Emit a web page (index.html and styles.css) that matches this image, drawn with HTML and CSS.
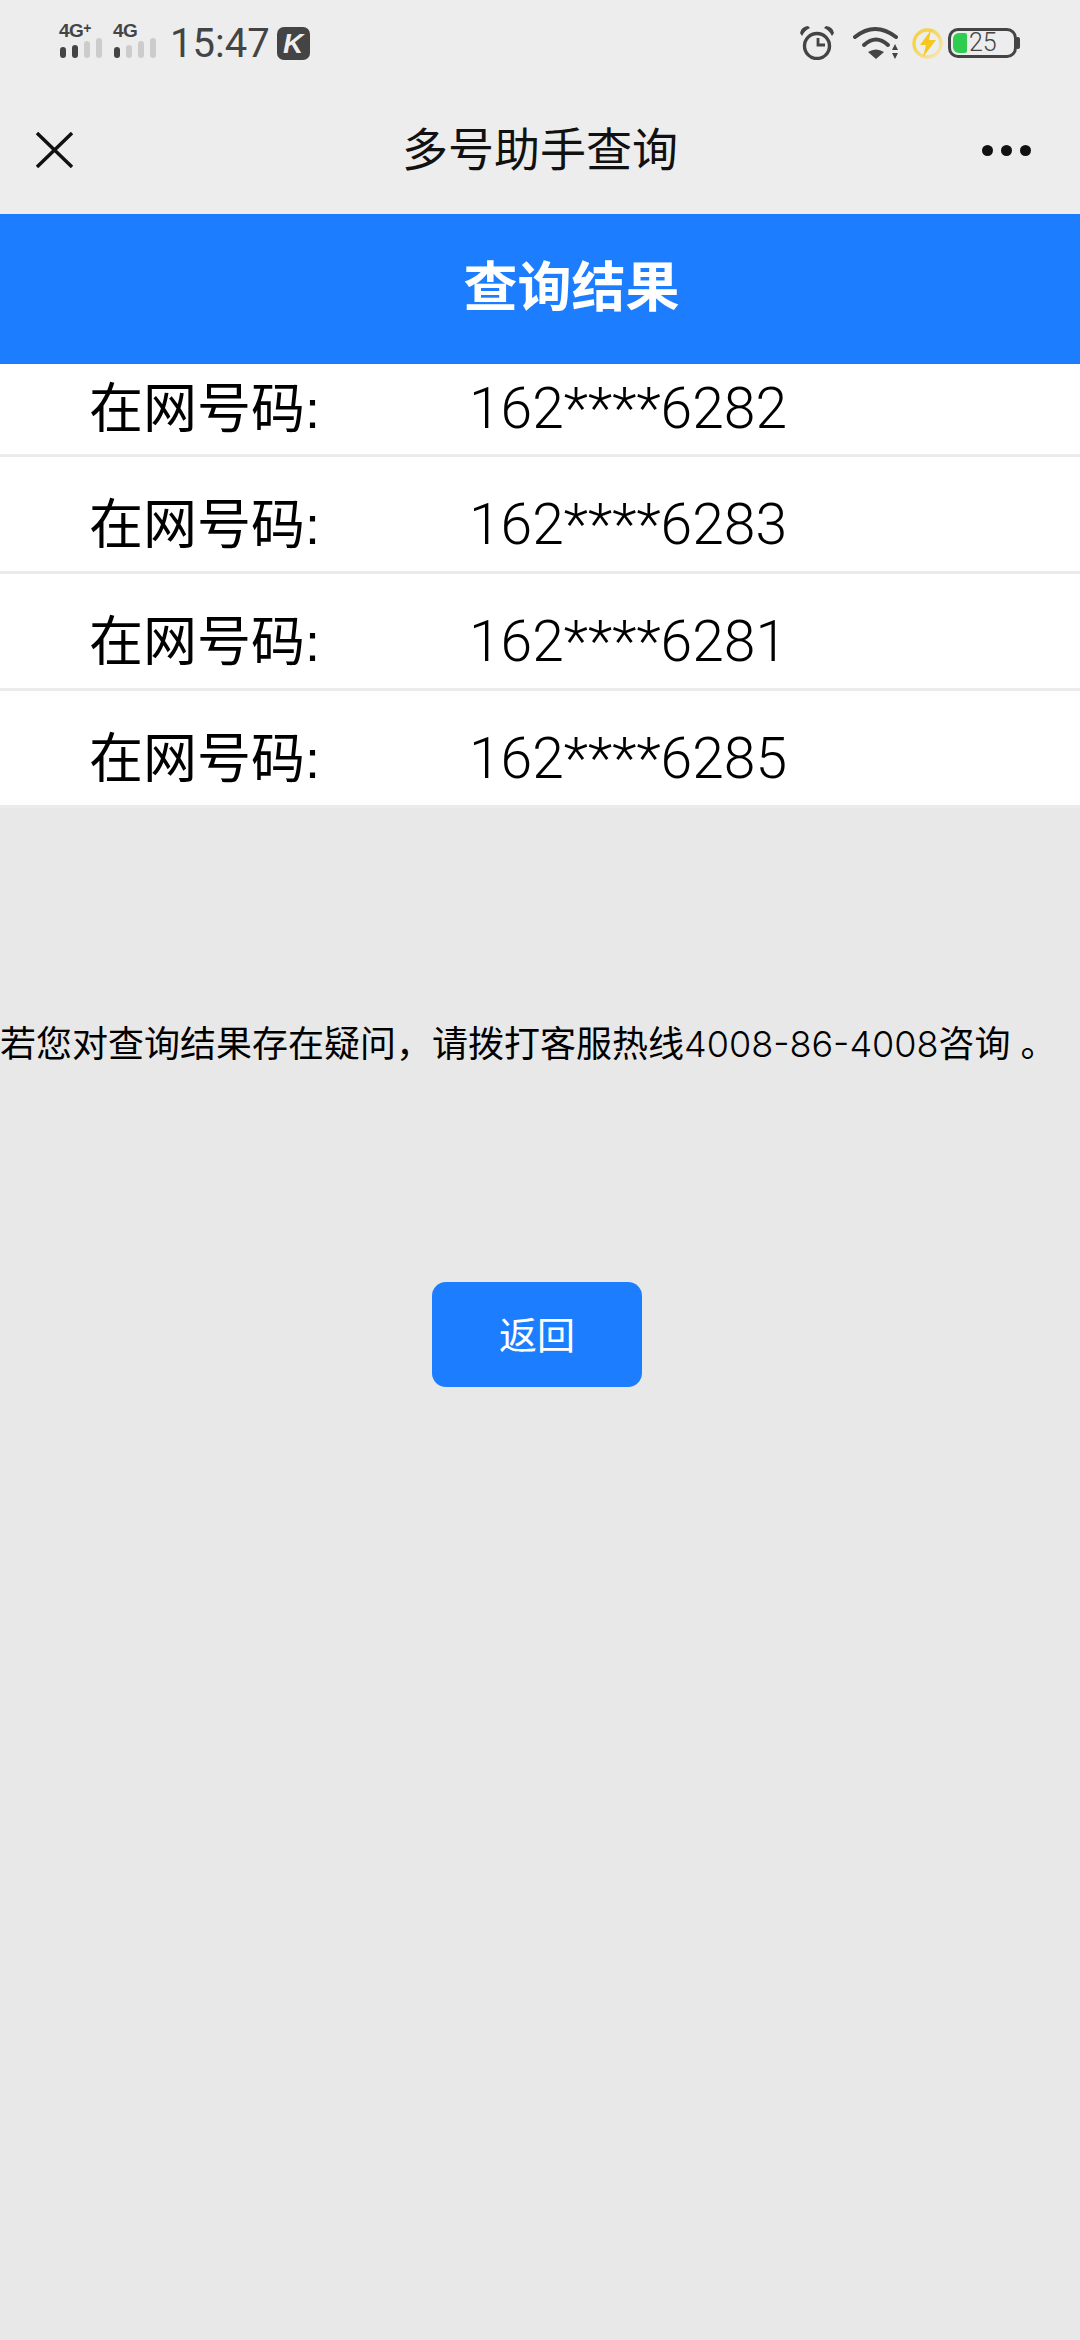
FILE: index.html
```html
<!DOCTYPE html>
<html lang="zh-CN">
<head>
    <meta charset="UTF-8">
    <meta name="viewport" content="width=device-width, initial-scale=1.0">
    <title>多号助手查询</title>
    <link rel="stylesheet" href="styles.css">
</head>
<body>
    <div class="status-bar">
        <div class="status-left">
            <div class="signal">
                <span class="signal-label">4G<sup>+</sup></span>
                <div class="bars">
                    <i class="on"></i><i class="on"></i><i></i><i></i>
                </div>
            </div>
            <div class="signal">
                <span class="signal-label">4G</span>
                <div class="bars">
                    <i class="on"></i><i></i><i></i><i></i>
                </div>
            </div>
            <span class="clock">15:47</span>
            <span class="k-badge">K</span>
        </div>
        <div class="status-right">
            <svg class="icon-alarm" width="34" height="34" viewBox="0 0 34 34">
                <circle cx="17" cy="20" r="12.5" fill="none" stroke="#444" stroke-width="3.4"/>
                <path d="M18 12V19H25" fill="none" stroke="#444" stroke-width="2.8"/>
                <path d="M0 7Q1 1 8 0L10 2Q5 4 2 10Z M34 7Q33 1 26 0L24 2Q29 4 32 10Z" fill="#444"/>
            </svg>
            <svg class="icon-wifi" width="46" height="34" viewBox="0 0 46 34">
                <path d="M2 11Q22 -5 43 11" fill="none" stroke="#444" stroke-width="4" stroke-linecap="round"/>
                <path d="M11 19Q23 8 35 19" fill="none" stroke="#444" stroke-width="4" stroke-linecap="round"/>
                <path d="M15 26Q23 21 31 26L23 33Z" fill="#444"/>
                <path d="M42 18L45 24H39Z M39 27H45L42 33Z" fill="#444"/>
            </svg>
            <svg class="icon-charge" width="31" height="31" viewBox="0 0 31 31">
                <defs>
                    <linearGradient id="ringFade" x1="0" y1="0" x2="1" y2="1">
                        <stop offset="0.3" stop-color="#f5d34c"/>
                        <stop offset="1" stop-color="#f5e9bb"/>
                    </linearGradient>
                </defs>
                <circle cx="15.5" cy="15.5" r="13.5" fill="none" stroke="url(#ringFade)" stroke-width="3.4"/>
                <path d="M19 2L8 17H14L11 29L24 12H17Z" fill="#f6c81e"/>
            </svg>
            <div class="battery">
                <div class="battery-body">
                    <span class="battery-level"></span>
                    <span class="battery-text">25</span>
                </div>
                <span class="battery-tip"></span>
            </div>
        </div>
    </div>

    <div class="nav-bar">
        <svg class="nav-close" width="37" height="36" viewBox="0 0 37 36">
            <path d="M1 1L36 35M36 1L1 35" stroke="#111" stroke-width="3.4" fill="none"/>
        </svg>
        <span class="nav-title">多号助手查询</span>
        <div class="nav-more"><i></i><i></i><i></i></div>
    </div>

    <div class="result-head">查询结果</div>

    <div class="result-list">
        <div class="row first"><span class="row-label">在网号码:</span><span class="row-number">162****6282</span></div>
        <div class="row"><span class="row-label">在网号码:</span><span class="row-number">162****6283</span></div>
        <div class="row"><span class="row-label">在网号码:</span><span class="row-number">162****6281</span></div>
        <div class="row"><span class="row-label">在网号码:</span><span class="row-number">162****6285</span></div>
    </div>

    <p class="notice">若您对查询结果存在疑问，请拨打客服热线<span class="hotline">4008-86-4008</span>咨询 。</p>

    <div class="actions">
        <button class="back-btn">返回</button>
    </div>
</body>
</html>
```

FILE: styles.css
```css
* {
    box-sizing: border-box;
}

html, body {
    margin: 0;
    height: 100%;
}

body {
    width: 1080px;
    height: 2340px;
    overflow: hidden;
    background-color: #e8e8e8;
    font-family: "Liberation Sans", "Noto Sans CJK SC", sans-serif;
    color: #000;
}

/* 状态栏 */
.status-bar {
    height: 86px;
    padding: 0 60px 0 59px;
    background-color: #ededed;
    display: flex;
    justify-content: space-between;
    align-items: center;
}

.status-left, .status-right {
    display: flex;
    align-items: center;
}

.signal {
    width: 54px;
    margin-bottom: 6px;
}

.signal-label {
    display: block;
    height: 15px;
    font-size: 19px;
    line-height: 15px;
    font-weight: bold;
    color: #444;
    letter-spacing: -0.5px;
}

.signal-label sup {
    font-size: 14px;
    line-height: 0;
    vertical-align: 4px;
}

.bars {
    display: flex;
    gap: 6px;
    height: 20px;
    margin: 0 0 0 1px;
    align-items: flex-end;
}

.bars i {
    width: 6px;
    border-radius: 3px;
    background-color: #ccc;
}

.bars i.on {
    background-color: #444;
}

.bars i:nth-child(1) {
    height: 11px;
}

.bars i:nth-child(2) {
    height: 13px;
}

.bars i:nth-child(3) {
    height: 17px;
}

.bars i:nth-child(4) {
    height: 20px;
}

.clock {
    margin-left: 3px;
    font-family: Roboto, sans-serif;
    font-size: 40px;
    color: #444;
}

.k-badge {
    width: 33px;
    height: 33px;
    margin-left: 7px;
    border-radius: 7px;
    background-color: #444;
    color: #eee;
    font-size: 28px;
    font-weight: bold;
    font-style: italic;
    line-height: 33px;
    text-align: center;
}

.icon-alarm {
    margin-right: 19px;
}

.icon-wifi {
    margin-right: 13px;
}

.icon-charge {
    margin-right: 5px;
}

.battery {
    display: flex;
    align-items: center;
}

.battery-body {
    width: 69px;
    height: 30px;
    border: 3px solid #444;
    border-radius: 10px;
    display: flex;
    align-items: center;
    padding: 0 2px;
}

.battery-level {
    width: 14px;
    height: 20px;
    border-radius: 6px 2px 2px 6px;
    background-color: #2ecc4f;
}

.battery-text {
    margin-left: 2px;
    font-family: Roboto, sans-serif;
    font-weight: 300;
    font-size: 25px;
    line-height: 24px;
    color: #444;
}

.battery-tip {
    width: 3px;
    height: 12px;
    border-radius: 0 2px 2px 0;
    background-color: #444;
}

/* 导航栏 */
.nav-bar {
    height: 128px;
    padding: 0 49px 0 36px;
    background-color: #ededed;
    display: flex;
    justify-content: space-between;
    align-items: center;
    position: relative;
}

.nav-title {
    position: absolute;
    left: 0;
    right: 0;
    top: 32px;
    text-align: center;
    font-size: 46px;
    line-height: 64px;
    color: #111;
}

.nav-more {
    display: flex;
    gap: 8px;
}

.nav-more i {
    width: 11px;
    height: 11px;
    border-radius: 50%;
    background-color: #111;
}

/* 标题 */
.result-head {
    height: 150px;
    padding-left: 63px;
    background-color: #1c7eff;
    color: #fff;
    font-size: 54px;
    font-weight: bold;
    line-height: 148px;
    text-align: center;
}

/* 结果列表 */
.row {
    height: 117px;
    padding: 22px 0 0 89px;
    background-color: #fff;
    border-bottom: 3px solid #ebebeb;
    display: flex;
    align-items: center;
}

.row.first {
    height: 93px;
    padding-top: 0;
}

.row-label {
    width: 380px;
    font-size: 54px;
    line-height: 70px;
}

.row-number {
    font-family: Roboto, sans-serif;
    font-weight: 300;
    font-size: 57px;
    line-height: 70px;
}

/* 提示文字 */
.notice {
    margin: 209px 0 0;
    font-size: 36px;
    line-height: 54px;
    white-space: nowrap;
}

.hotline {
    font-family: Inter, sans-serif;
    font-size: 36px;
    font-weight: 300;
}

.actions {
    margin-top: 210px;
    padding-right: 6px;
    display: flex;
    justify-content: center;
}

.back-btn {
    width: 210px;
    height: 105px;
    padding: 0 0 4px;
    border: 0;
    border-radius: 14px;
    background-color: #1c7eff;
    color: #fff;
    font-family: "Liberation Sans", "Noto Sans CJK SC", sans-serif;
    font-size: 38px;
}
```
